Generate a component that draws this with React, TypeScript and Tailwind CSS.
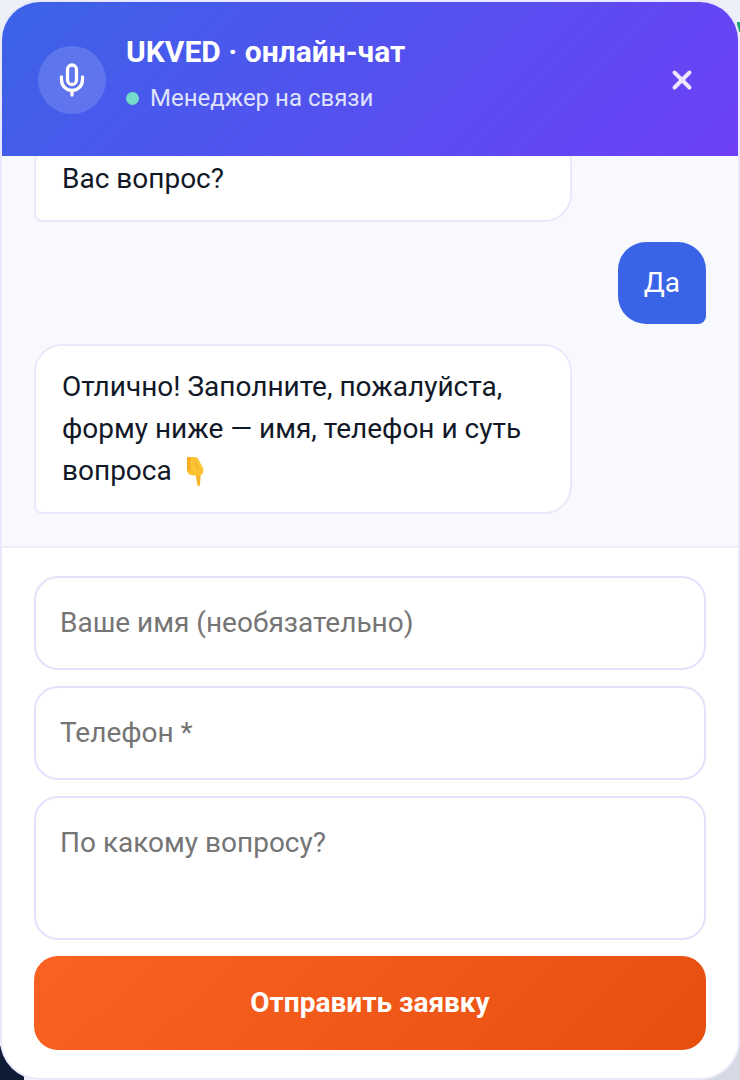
import React from "react";
import { Mic, X } from "lucide-react";

const PointDown: React.FC = () => (
  <svg className="inline-block w-[18px] h-[30px] align-[-7px] ml-[14px]" viewBox="0 0 18 30">
    {/* index finger */}
    <path d="M9 14h6l-1 13.500c0 1-.6 1.500-1.300 1.500s-1.300-.5-1.400-1.500z" fill="#f9b62a" />
    {/* fist */}
    <path d="M1 1c0-.6.4-1 1-1h7c1.500 0 2.700 1 3.500 2.500L17 11c.6 1.500.6 3.500 0 5-.6 1.500-2 2.500-3.500 2.500H8c-3.500 0-7-1.500-7-5.500z" fill="#fcc433" />
    {/* shading */}
    <path d="M1 1c0-.6.4-1 1-1h2.500v15C2.500 14.500 1 13.500 1 12z" fill="#f6ae27" />
    <path d="M9 4l3 8" stroke="#efa022" strokeWidth="1" fill="none" />
  </svg>
);

const inputClass =
  "w-full h-[94px] px-[24px] pb-[2px] bg-white border-2 border-[#e2e2fa] rounded-[24px] text-[28px] text-[#111827] placeholder:text-[#757575] outline-none";

export default function App() {
  return (
    <div className="relative w-[740px] h-[1080px] bg-[#eef0f8] overflow-hidden font-['Roboto',sans-serif]">
      {/* bits of the page showing behind the rounded corners */}
      <div className="absolute left-0 bottom-0 w-[24px] h-[34px] bg-[#101b36]" />
      <div className="absolute right-0 bottom-0 w-[40px] h-[40px] bg-[#d5d9e4]" />
      <div className="absolute right-0 top-[22px] w-[3px] h-[10px] bg-[#17a673]" />

      <div className="relative flex flex-col h-[1080px] bg-white border-2 border-[#e9e9fb] rounded-[40px] overflow-hidden">
        {/* header */}
        <div className="flex items-center h-[154px] pt-[2px] pl-[36px] pr-[36px] bg-[linear-gradient(135deg,#3b63e8,#6d3ff6)] shrink-0">
          <div className="flex items-center justify-center w-[68px] h-[68px] rounded-full bg-white/15 shrink-0">
            <Mic size={36} strokeWidth={2.2} className="text-white" />
          </div>
          <div className="flex-1 ml-[20px] -mt-[12px]">
            <div className="text-[30px] leading-[36px] font-bold text-white">UKVED · онлайн-чат</div>
            <div className="flex items-center mt-[12px] text-[24px] leading-[32px] text-[#dfe3fc]">
              <span className="w-[13px] h-[13px] rounded-full bg-[#74dcc8] mr-[11px]" />
              Менеджер на связи
            </div>
          </div>
          <X size={30} strokeWidth={3.2} className="text-[#ece6fd] mr-[5px]" />
        </div>

        {/* messages */}
        <div className="flex flex-col justify-end flex-1 min-h-0 overflow-hidden bg-[#f8f9fd] px-[32px] pb-[32px] gap-[20px]">
          <div className="w-[538px] shrink-0 bg-white border-2 border-[#e9e9fb] rounded-[28px] rounded-bl-[8px] px-[26px] py-[20px] text-[28px] leading-[42px] text-[#111827]">
            Вас вопрос?
          </div>
          <div className="self-end shrink-0 h-[82px] px-[26px] flex items-center bg-[#3a64e8] rounded-[28px] rounded-br-[8px] text-[28px] text-white">
            Да
          </div>
          <div className="w-[538px] shrink-0 bg-white border-2 border-[#e9e9fb] rounded-[28px] rounded-bl-[8px] px-[26px] py-[20px] text-[28px] leading-[42px] text-[#111827]">
            Отлично! Заполните, пожалуйста, форму ниже — имя, телефон и суть вопроса
            <PointDown />
          </div>
        </div>

        {/* form */}
        <div className="flex flex-col shrink-0 bg-white border-t-2 border-[#eeeefa] px-[32px] pt-[28px] pb-[28px] gap-[16px]">
          <input className={inputClass} placeholder="Ваше имя (необязательно)" />
          <input className={inputClass} placeholder="Телефон *" />
          <textarea
            className="w-full h-[144px] px-[24px] pt-[27px] pb-[20px] bg-white border-2 border-[#e2e2fa] rounded-[24px] text-[28px] leading-[36px] text-[#111827] placeholder:text-[#757575] outline-none resize-none"
            placeholder="По какому вопросу?"
          />
          <button className="w-full h-[94px] rounded-[24px] bg-[linear-gradient(135deg,#fa6222,#e64f0f)] text-[28px] font-bold text-white">
            Отправить заявку
          </button>
        </div>
      </div>
    </div>
  );
}
